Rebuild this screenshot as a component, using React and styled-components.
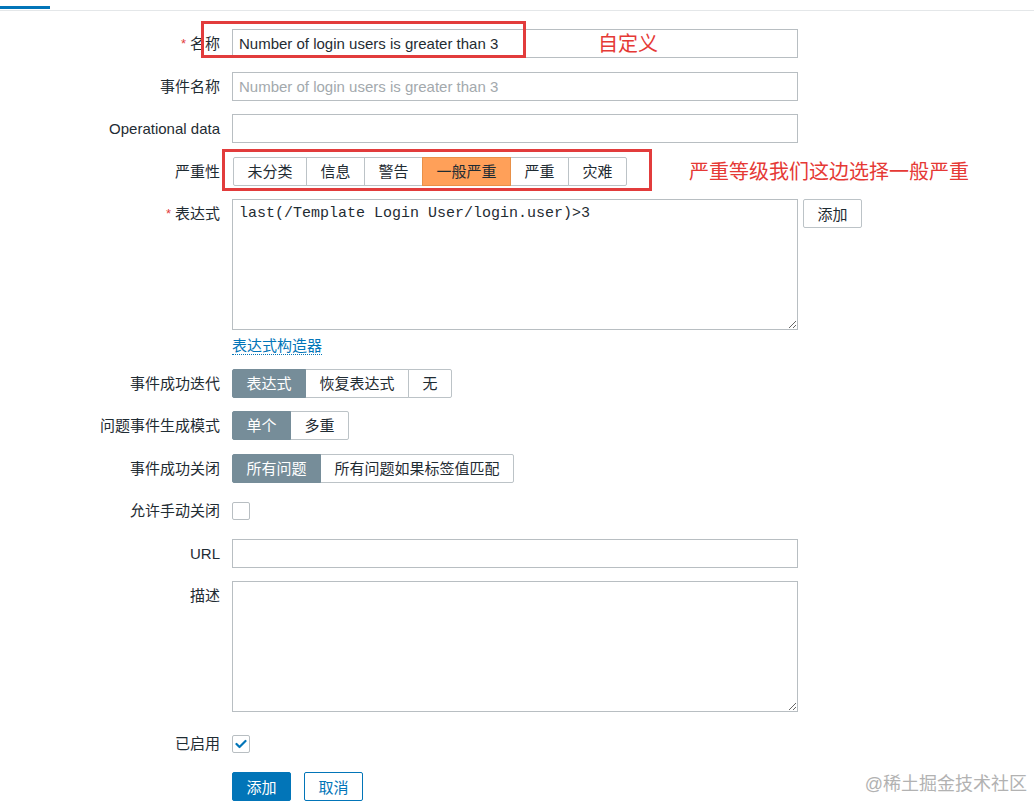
import React from "react";
import styled, { createGlobalStyle } from "styled-components";

const FONT = `"Liberation Sans", "Noto Sans CJK SC", sans-serif`;
const BLUE = "#0275b8";
const RED = "#e23c3c";

const GlobalStyle = createGlobalStyle`
  html, body {
    margin: 0;
    padding: 0;
    background: #fff;
  }
  body {
    font-family: ${FONT};
    font-size: 15px;
    color: #1f2c33;
  }
`;

const Page = styled.div`
  position: relative;
  width: 1034px;
  height: 802px;
  overflow: hidden;
`;

const TabBar = styled.div`
  height: 10px;
  border-bottom: 1px solid #e4e7e9;
  display: flex;
  align-items: flex-end;
`;

const ActiveTab = styled.div`
  width: 50px;
  height: 3px;
  margin-bottom: 1px;
  background: ${BLUE};
`;

const Form = styled.form`
  display: flex;
  flex-direction: column;
`;

const Row = styled.div`
  position: relative;
  display: grid;
  grid-template-columns: 220px auto;
  column-gap: 12px;
  align-items: start;
  margin-top: ${(p) => p.$mt ?? 13}px;
`;

const Label = styled.label`
  text-align: right;
  line-height: 29px;
  height: 29px;
  white-space: nowrap;
  color: #1f2c33;
`;

const Required = styled.span`
  color: ${RED};
  font-size: 13px;
  margin-right: 4px;
  vertical-align: 1px;
`;

const Field = styled.div`
  display: flex;
  align-items: ${(p) => (p.$center ? "center" : "flex-start")};
  min-height: 29px;
  gap: 5px;
`;

const FieldStack = styled.div`
  display: flex;
  flex-direction: column;
  align-items: flex-start;
`;

const TextInput = styled.input`
  box-sizing: border-box;
  width: 566px;
  height: 29px;
  padding: 0 6px;
  border: 1px solid #b8bec2;
  border-radius: 0;
  font-family: ${FONT};
  font-size: 15px;
  color: #1f2c33;
  background: #fff;
  outline: none;
  &::placeholder {
    color: #a3a9ad;
  }
`;

const TextArea = styled.textarea`
  box-sizing: border-box;
  width: 566px;
  height: 131px;
  padding: 5px 6px;
  border: 1px solid #b8bec2;
  border-radius: 0;
  font-family: ${(p) => (p.$mono ? `"Liberation Mono", monospace` : FONT)};
  font-size: 15px;
  line-height: 18px;
  color: #1f2c33;
  background: #fff;
  outline: none;
  resize: both;
`;

const Segmented = styled.div`
  display: inline-flex;
  height: 29px;
  margin-left: ${(p) => p.$offset ?? 0}px;
`;

const Segment = styled.span`
  box-sizing: border-box;
  height: 29px;
  line-height: 27px;
  padding: 0 13.5px;
  border: 1px solid ${(p) => (p.$active ? p.$activeBorder : "#bcc3c7")};
  margin-left: -1px;
  background: ${(p) => (p.$active ? p.$activeBg : "#fff")};
  color: ${(p) => (p.$active ? p.$activeColor : "#1f2c33")};
  white-space: nowrap;
  position: relative;
  z-index: ${(p) => (p.$active ? 1 : 0)};
  &:first-child {
    margin-left: 0;
    border-radius: 2px 0 0 2px;
  }
  &:last-child {
    border-radius: 0 2px 2px 0;
  }
`;

const Button = styled.button`
  box-sizing: border-box;
  height: 29px;
  padding: 0 13.5px;
  border-radius: 2px;
  font-family: ${FONT};
  font-size: 15px;
  cursor: pointer;
  border: 1px solid ${(p) => (p.$variant === "primary" || p.$variant === "outline" ? BLUE : "#bcc3c7")};
  background: ${(p) => (p.$variant === "primary" ? BLUE : "#fff")};
  color: ${(p) => (p.$variant === "primary" ? "#fff" : p.$variant === "outline" ? BLUE : "#1f2c33")};
`;

const ButtonRow = styled.div`
  display: flex;
  gap: 13px;
`;

const Link = styled.a`
  margin-top: 7px;
  line-height: 17px;
  color: ${BLUE};
  text-decoration: none;
  border-bottom: 1px dotted ${BLUE};
  cursor: pointer;
`;

const Checkbox = styled.span`
  box-sizing: border-box;
  width: 18px;
  height: 18px;
  border: 1px solid #b8bec2;
  border-radius: 2px;
  background: #fff;
  display: inline-flex;
  align-items: center;
  justify-content: center;
`;

const Highlight = styled.div`
  position: absolute;
  left: ${(p) => p.$left}px;
  top: ${(p) => p.$top}px;
  width: ${(p) => p.$w}px;
  height: ${(p) => p.$h}px;
  box-sizing: border-box;
  border: 3px solid ${RED};
  pointer-events: none;
`;

const Note = styled.span`
  position: absolute;
  left: ${(p) => p.$left}px;
  top: ${(p) => p.$top}px;
  font-size: 20px;
  line-height: 20px;
  color: #e53935;
  white-space: nowrap;
`;

const Watermark = styled.span`
  position: absolute;
  right: 7px;
  bottom: 6px;
  font-size: 18px;
  line-height: 24px;
  color: #b2b2b2;
`;

const severities = ["未分类", "信息", "警告", "一般严重", "严重", "灾难"];

const GraySeg = ({ items, active }) => (
  <Segmented>
    {items.map((t, i) => (
      <Segment
        key={t}
        $active={i === active}
        $activeBg="#768d99"
        $activeBorder="#768d99"
        $activeColor="#fff"
      >
        {t}
      </Segment>
    ))}
  </Segmented>
);

const Check = () => (
  <svg width="12" height="10" viewBox="0 0 12 10">
    <path d="M1.5 5 L4.5 8 L10.5 2" fill="none" stroke={BLUE} strokeWidth="2.2" strokeLinecap="round" strokeLinejoin="round" />
  </svg>
);

export default function App() {
  return (
    <Page>
      <GlobalStyle />
      <TabBar>
        <ActiveTab />
      </TabBar>
      <Form>
        <Row $mt={18}>
          <Label>
            <Required>*</Required>名称
          </Label>
          <Field>
            <TextInput defaultValue="Number of login users is greater than 3" />
          </Field>
          <Highlight $left={201} $top={-8} $w={325} $h={37} />
          <Note $left={598} $top={5}>自定义</Note>
        </Row>

        <Row $mt={14}>
          <Label>事件名称</Label>
          <Field>
            <TextInput placeholder="Number of login users is greater than 3" />
          </Field>
        </Row>

        <Row>
          <Label>Operational data</Label>
          <Field>
            <TextInput />
          </Field>
        </Row>

        <Row $mt={14}>
          <Label>严重性</Label>
          <Field>
            <Segmented $offset={1}>
              {severities.map((s, i) => (
                <Segment
                  key={s}
                  $active={i === 3}
                  $activeBg="#ffa059"
                  $activeBorder="#e89048"
                  $activeColor="#1f2c33"
                >
                  {s}
                </Segment>
              ))}
            </Segmented>
          </Field>
          <Highlight $left={222} $top={-8} $w={430} $h={42} />
          <Note $left={689} $top={5}>严重等级我们这边选择一般严重</Note>
        </Row>

        <Row>
          <Label>
            <Required>*</Required>表达式
          </Label>
          <Field>
            <FieldStack>
              <TextArea $mono defaultValue="last(/Template Login User/login.user)>3" />
              <Link>表达式构造器</Link>
            </FieldStack>
            <Button>添加</Button>
          </Field>
        </Row>

        <Row $mt={14}>
          <Label>事件成功迭代</Label>
          <Field>
            <GraySeg items={["表达式", "恢复表达式", "无"]} active={0} />
          </Field>
        </Row>

        <Row>
          <Label>问题事件生成模式</Label>
          <Field>
            <GraySeg items={["单个", "多重"]} active={0} />
          </Field>
        </Row>

        <Row $mt={14}>
          <Label>事件成功关闭</Label>
          <Field>
            <GraySeg items={["所有问题", "所有问题如果标签值匹配"]} active={0} />
          </Field>
        </Row>

        <Row>
          <Label>允许手动关闭</Label>
          <Field $center>
            <Checkbox />
          </Field>
        </Row>

        <Row $mt={14}>
          <Label>URL</Label>
          <Field>
            <TextInput />
          </Field>
        </Row>

        <Row>
          <Label>描述</Label>
          <Field>
            <TextArea />
          </Field>
        </Row>

        <Row $mt={17}>
          <Label>已启用</Label>
          <Field $center>
            <Checkbox>
              <Check />
            </Checkbox>
          </Field>
        </Row>

        <Row $mt={14}>
          <span />
          <ButtonRow>
            <Button $variant="primary">添加</Button>
            <Button $variant="outline">取消</Button>
          </ButtonRow>
        </Row>
      </Form>
      <Watermark>@稀土掘金技术社区</Watermark>
    </Page>
  );
}
